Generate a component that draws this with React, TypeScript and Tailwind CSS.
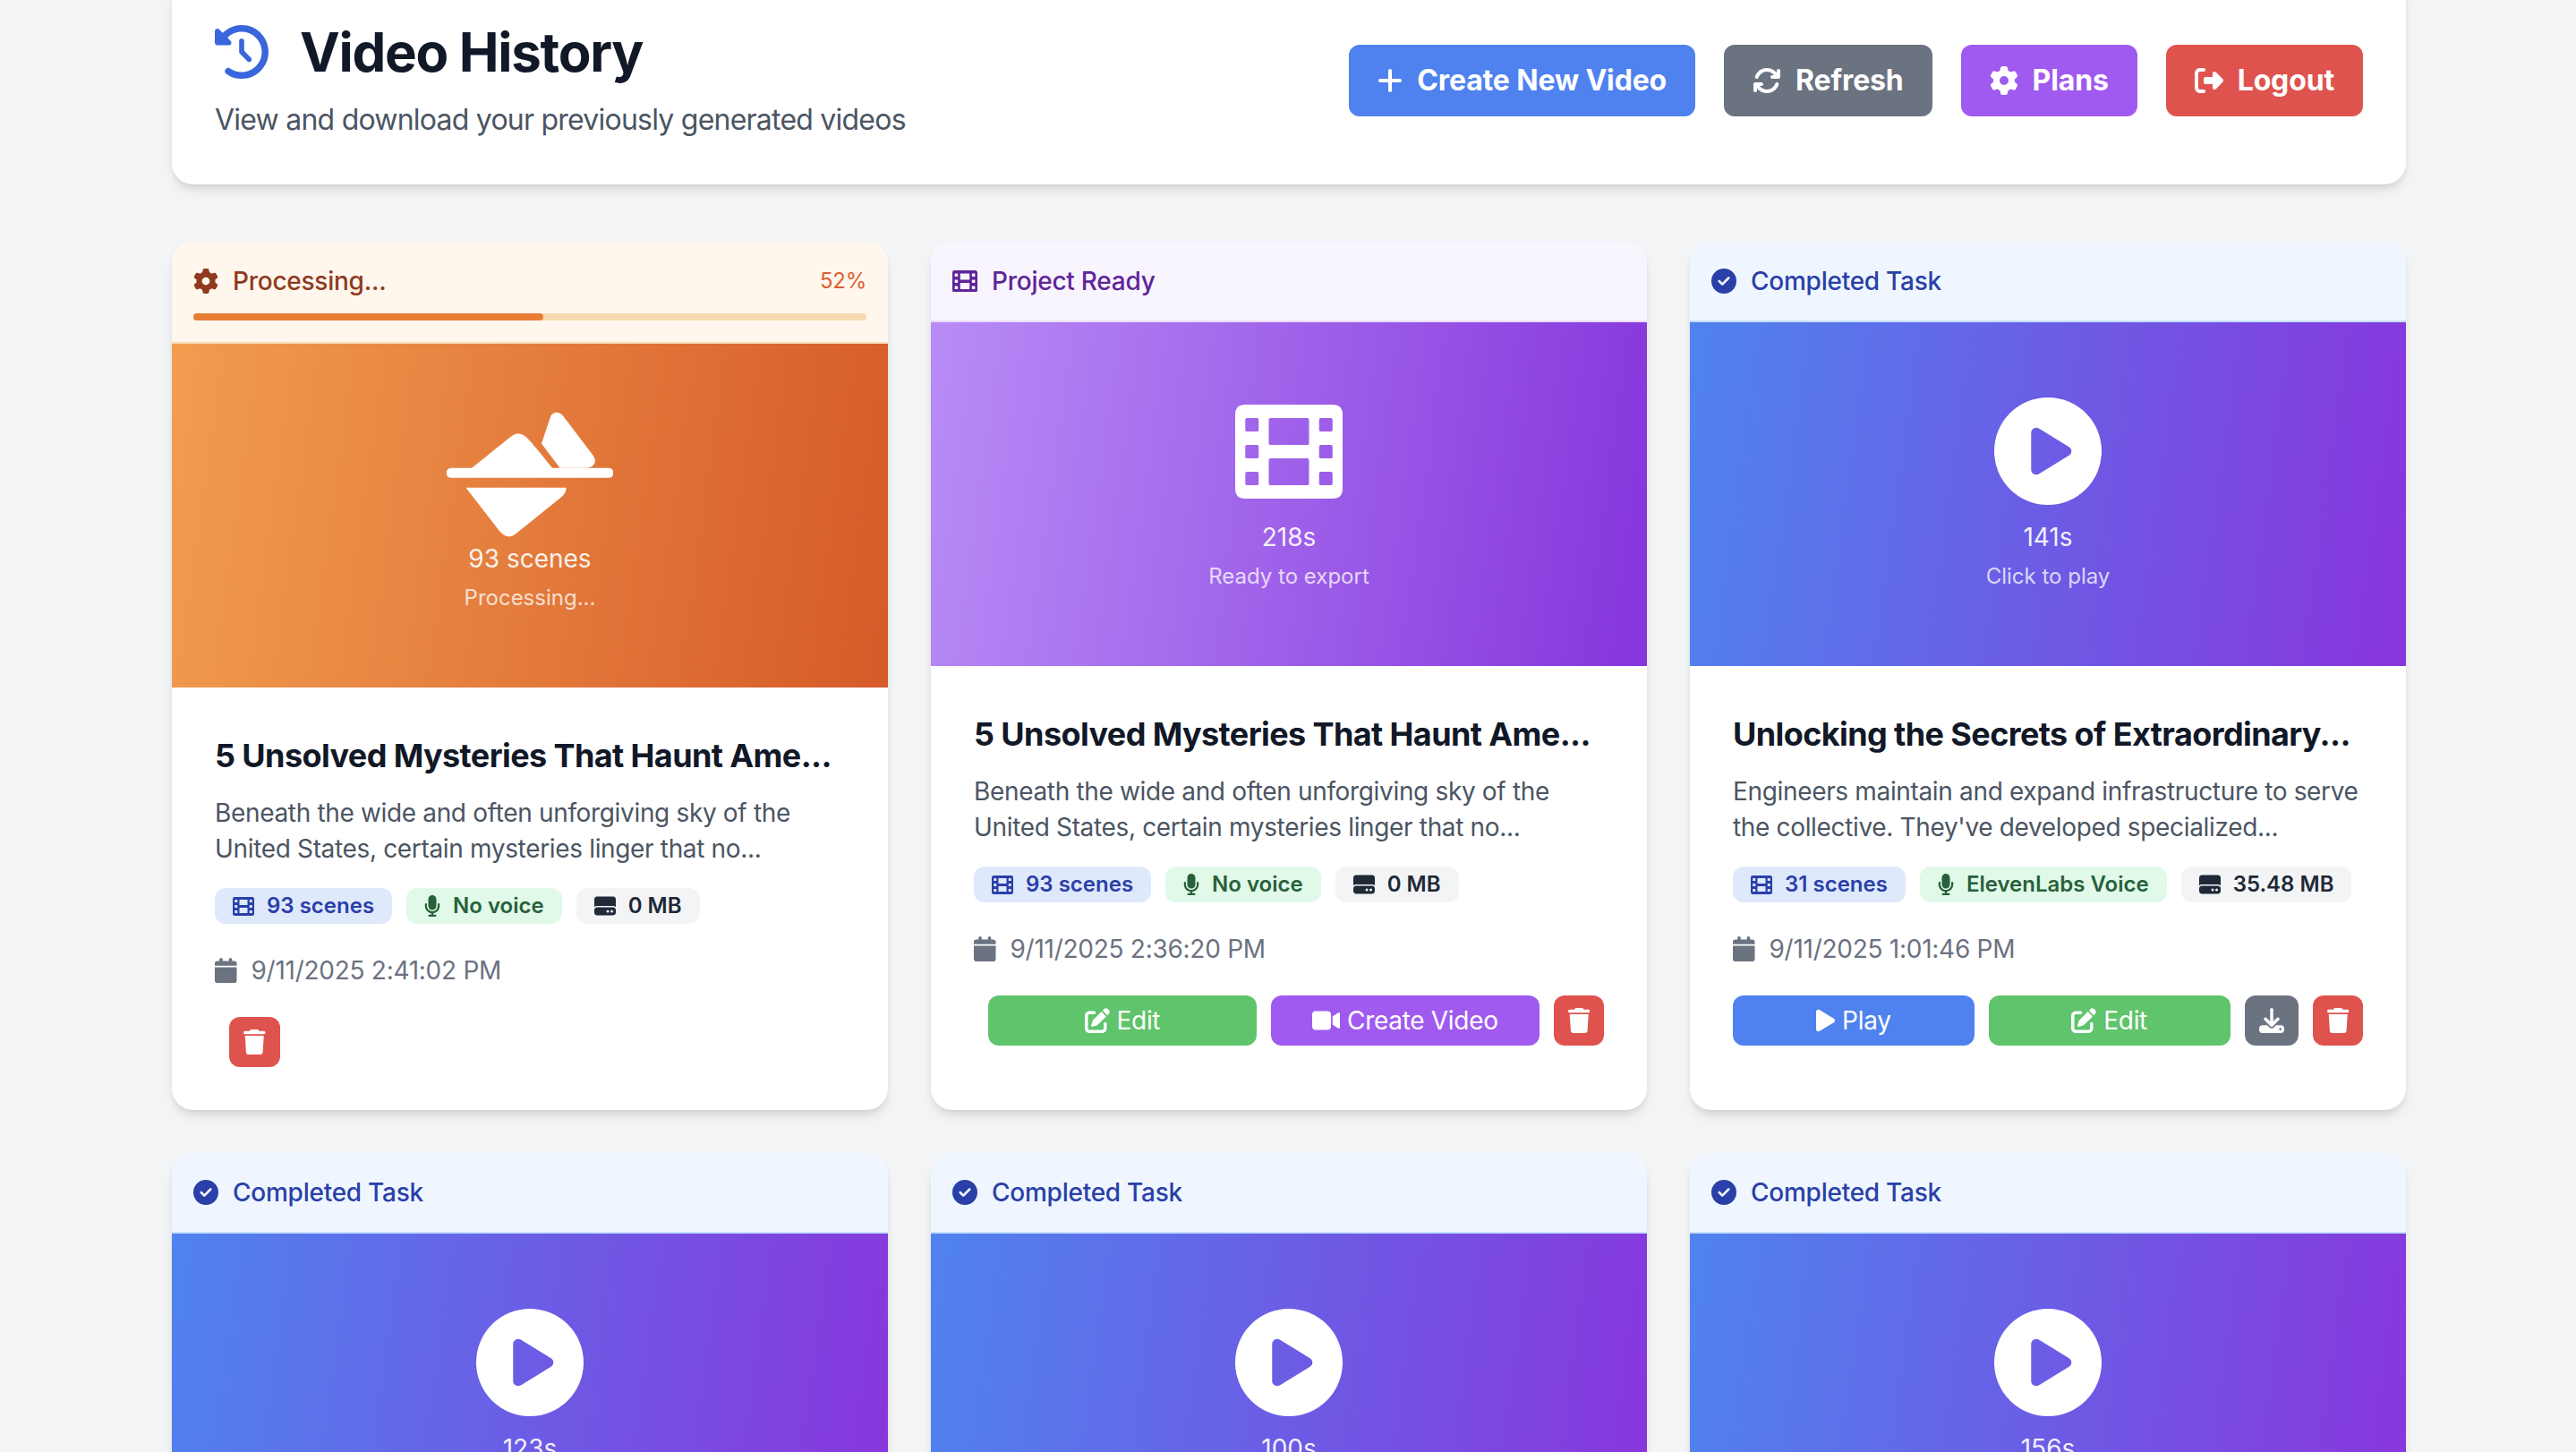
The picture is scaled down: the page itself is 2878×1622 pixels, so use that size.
import React from 'react';
import {
  FaCalendar,
  FaCircleCheck,
  FaCirclePlay,
  FaClockRotateLeft,
  FaDownload,
  FaGear,
  FaHardDrive,
  FaMicrophone,
  FaPenToSquare,
  FaPlay,
  FaPlus,
  FaArrowsRotate,
  FaRightFromBracket,
  FaTrash,
  FaVideo,
} from 'react-icons/fa6';

type Video = {
  kind: 'processing' | 'project' | 'completed';
  big: string;
  sub: string;
  title?: string;
  desc?: string[];
  scenes?: string;
  voice?: string;
  size?: string;
  date?: string;
};

const videos: Video[] = [
  {
    kind: 'processing',
    big: '93 scenes',
    sub: 'Processing...',
    title: '5 Unsolved Mysteries That Haunt Ame...',
    desc: ['Beneath the wide and often unforgiving sky of the', 'United States, certain mysteries linger that no...'],
    scenes: '93 scenes',
    voice: 'No voice',
    size: '0 MB',
    date: '9/11/2025 2:41:02 PM',
  },
  {
    kind: 'project',
    big: '218s',
    sub: 'Ready to export',
    title: '5 Unsolved Mysteries That Haunt Ame...',
    desc: ['Beneath the wide and often unforgiving sky of the', 'United States, certain mysteries linger that no...'],
    scenes: '93 scenes',
    voice: 'No voice',
    size: '0 MB',
    date: '9/11/2025 2:36:20 PM',
  },
  {
    kind: 'completed',
    big: '141s',
    sub: 'Click to play',
    title: 'Unlocking the Secrets of Extraordinary...',
    desc: ['Engineers maintain and expand infrastructure to serve', "the collective. They've developed specialized..."],
    scenes: '31 scenes',
    voice: 'ElevenLabs Voice',
    size: '35.48 MB',
    date: '9/11/2025 1:01:46 PM',
  },
  { kind: 'completed', big: '123s', sub: 'Click to play' },
  { kind: 'completed', big: '100s', sub: 'Click to play' },
  { kind: 'completed', big: '156s', sub: 'Click to play' },
];

// film strip with square-ish holes, the package's newer one has rounder cells
const FilmIcon = ({ className }: { className: string }) => (
  <svg viewBox="0 32 512 448" className={className} fill="currentColor" fillRule="evenodd">
    <path d="M48 32H464Q512 32 512 80V432Q512 480 464 480H48Q0 480 0 432V80Q0 32 48 32Z
      M56 96Q48 96 48 104V152Q48 160 56 160H104Q112 160 112 152V104Q112 96 104 96Z
      M56 224Q48 224 48 232V280Q48 288 56 288H104Q112 288 112 280V232Q112 224 104 224Z
      M56 352Q48 352 48 360V408Q48 416 56 416H104Q112 416 112 408V360Q112 352 104 352Z
      M408 96Q400 96 400 104V152Q400 160 408 160H456Q464 160 464 152V104Q464 96 456 96Z
      M408 224Q400 224 400 232V280Q400 288 408 288H456Q464 288 464 280V232Q464 224 456 224Z
      M408 352Q400 352 400 360V408Q400 416 408 416H456Q464 416 464 408V360Q464 352 456 352Z
      M168 96Q160 96 160 104V216Q160 224 168 224H344Q352 224 352 216V104Q352 96 344 96Z
      M168 288Q160 288 160 296V408Q160 416 168 416H344Q352 416 352 408V296Q352 288 344 288Z" />
  </svg>
);

// the big icon on the processing card, traced from the picture
const ProcessingIcon = () => (
  <svg viewBox="50 55 570 430" className="w-[190px] h-[143px] shrink-0 translate-y-[2px]" fill="white">
    <path d="M72 247H140L270 142Q295 120 322 142Q340 158 410 247H600Q615 248 615 263Q615 280 600 280H72Q55 280 55 263Q55 248 72 247Z" />
    <path d="M405 72Q412 60 425 60Q438 60 447 72L548 205Q558 220 552 232Q545 246 525 247H436L374 165Z" />
    <path d="M120 313H457Q457 332 440 345L285 470Q265 485 245 470Q235 462 230 455Z" />
  </svg>
);

const TopButton = ({ icon, label, color }: { icon: React.ReactNode; label: string; color: string }) => (
  <button className={`flex items-center gap-4 px-8 py-4 rounded-[12px] text-white text-[32px] leading-[48px] font-bold tracking-[-0.15px] ${color}`}>
    {icon}
    {label}
  </button>
);

const ActionButton = ({ icon, label, color }: { icon: React.ReactNode; label?: string; color: string }) => (
  <button className={`h-14 flex items-center justify-center gap-2 px-4 rounded-[12px] text-white text-[28px] leading-[40px] tracking-[-0.3px] ${label ? 'flex-1' : ''} ${color}`}>
    {icon}
    {label}
  </button>
);

const Chip = ({ icon, label, color }: { icon: React.ReactNode; label: string; color: string }) => (
  <span className={`flex items-center gap-[14px] px-5 py-1 rounded-[12px] text-[24px] leading-[32px] font-semibold ${color}`}>
    {icon}
    {label}
  </span>
);

const VideoCard = ({ video }: { video: Video }) => {
  const { kind } = video;
  return (
    <div className="bg-white rounded-[24px] overflow-hidden shadow-[0_8px_12px_-2px_rgba(0,0,0,0.1),0_4px_8px_-4px_rgba(0,0,0,0.1)]">
      {kind === 'processing' && (
        <div className="p-6 bg-[#fff7ed] border-b-2 border-[#f9dcb9]">
          <div className="flex items-center justify-between">
            <span className="flex items-center gap-4 text-[28px] leading-[40px] font-medium tracking-[-0.25px] text-[#8f3a1e]">
              <FaGear className="h-7 w-7" />
              Processing...
            </span>
            <span className="text-[24px] leading-[32px] tracking-[-0.25px] text-[#dc6030]">52%</span>
          </div>
          <div className="mt-4 h-2 rounded-full bg-[#f8d9b0]">
            <div className="h-2 w-[52%] rounded-full bg-[#e97c35]" />
          </div>
        </div>
      )}
      {kind === 'project' && (
        <div className="flex items-center gap-4 p-6 bg-[#f9f5ff] border-b-2 border-[#ebdcfe] text-[28px] leading-[40px] font-medium tracking-[-0.25px] text-[#5f2599]">
          <FilmIcon className="h-[24.5px] w-7" />
          Project Ready
        </div>
      )}
      {kind === 'completed' && (
        <div className="flex items-center gap-4 p-6 bg-[#eff6ff] border-b-2 border-[#c5defd] text-[28px] leading-[40px] font-medium tracking-[-0.25px] text-[#2a40a8]">
          <FaCircleCheck className="h-7 w-7" />
          Completed Task
        </div>
      )}

      <div
        className={`h-[384px] flex flex-col items-center justify-center text-white ${
          kind === 'processing'
            ? 'bg-linear-[98deg,#f19d50,#d65a28]'
            : kind === 'project'
              ? 'bg-linear-[98deg,#b88cf6,#8535dc]'
              : 'bg-linear-[98deg,#4f83ee,#8935dc]'
        }`}
      >
        <div className="h-[120px] flex items-center justify-center">
          {kind === 'processing' && <ProcessingIcon />}
          {kind === 'project' && <FilmIcon className="h-[105px] w-[120px]" />}
          {kind === 'completed' && <FaCirclePlay className="h-[120px] w-[120px]" />}
        </div>
        <div className="mt-4 text-[28px] leading-[40px] opacity-90">{video.big}</div>
        <div className="mt-2 text-[24px] leading-[32px] opacity-75">{video.sub}</div>
      </div>

      {video.title && (
        <div className="px-12 pt-12 pb-6">
          <h3 className="mb-4 text-[36px] leading-[56px] font-bold tracking-[-0.6px] text-[#111827] whitespace-nowrap">{video.title}</h3>
          <p className="mb-6 text-[28px] leading-[40px] tracking-[-0.34px] text-[#4b5563] whitespace-nowrap">
            {video.desc?.[0]}
            <br />
            {video.desc?.[1]}
          </p>
          <div className="flex gap-4 mb-8">
            <Chip icon={<FilmIcon className="h-[21px] w-6" />} label={video.scenes ?? ''} color="bg-[#dfe9fc] text-[#2a40a8]" />
            <Chip icon={<FaMicrophone className="h-6 w-[18px]" />} label={video.voice ?? ''} color="bg-[#e1f9e9] text-[#27613a]" />
            <Chip icon={<FaHardDrive className="h-6 w-6" />} label={video.size ?? ''} color="bg-[#f3f4f6] text-[#1f2937]" />
          </div>
          <div className="flex items-center gap-4 mb-8 text-[28px] leading-[40px] tracking-[-0.27px] text-[#6b7280]">
            <FaCalendar className="h-7 w-[24.5px]" />
            {video.date}
          </div>
          <div className="flex gap-4 mb-6">
            {kind === 'completed' ? (
              <ActionButton icon={<FaPlay className="h-7 w-[21px]" />} label="Play" color="bg-[#4f82ee]" />
            ) : (
              <span />
            )}
            {kind !== 'processing' && <ActionButton icon={<FaPenToSquare className="h-7 w-7" />} label="Edit" color="bg-[#5fc46b]" />}
            {kind === 'project' && <ActionButton icon={<FaVideo className="h-7 w-[31.5px]" />} label="Create Video" color="bg-[#a05aef]" />}
            {kind === 'completed' && <ActionButton icon={<FaDownload className="h-7 w-7" />} color="bg-[#6b7280]" />}
            <ActionButton icon={<FaTrash className="h-7 w-[24.5px]" />} color="bg-[#df534f]" />
          </div>
        </div>
      )}
    </div>
  );
};

const App = () => {
  return (
    <div className="h-screen overflow-hidden bg-[#f3f4f6] pl-[192px] pr-[190px] font-[Inter,sans-serif]">
      <div className="-mt-[26px] mb-16 flex items-center justify-between p-12 bg-white rounded-[24px] shadow-[0_8px_12px_-2px_rgba(0,0,0,0.1),0_4px_8px_-4px_rgba(0,0,0,0.1)]">
        <div>
          <div className="flex items-center gap-[35px] mb-4">
            <FaClockRotateLeft className="h-[60px] w-[60px] text-[#3a66dc]" />
            <h1 className="text-[60px] leading-[72px] font-bold tracking-[-1.3px] text-[#111827]">Video History</h1>
          </div>
          <p className="text-[32px] leading-[48px] tracking-[-0.77px] text-[#4b5563]">View and download your previously generated videos</p>
        </div>
        <div className="flex gap-8">
          <TopButton icon={<FaPlus className="h-8 w-7" />} label="Create New Video" color="bg-[#4f82ee]" />
          <TopButton icon={<FaArrowsRotate className="h-8 w-8" />} label="Refresh" color="bg-[#6b7280]" />
          <TopButton icon={<FaGear className="h-8 w-8" />} label="Plans" color="bg-[#a05aef]" />
          <TopButton icon={<FaRightFromBracket className="h-8 w-8" />} label="Logout" color="bg-[#df534f]" />
        </div>
      </div>

      <div className="grid grid-cols-3 gap-12">
        {videos.map((video, index) => (
          <VideoCard key={index} video={video} />
        ))}
      </div>
    </div>
  );
};

export default App;
